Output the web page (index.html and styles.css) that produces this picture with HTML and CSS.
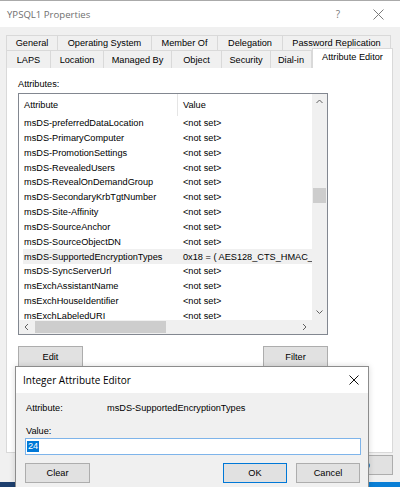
FILE: index.html
```html
<!DOCTYPE html>
<html>
<head>
<meta charset="utf-8">
<link rel="stylesheet" href="styles.css">
</head>
<body>
<div class="win">
  <div class="titlebar">
    <span class="title">YPSQL1 Properties</span>
    <span class="qmark">?</span>
    <svg class="xbtn" width="11" height="11" viewBox="0 0 11 11"><path d="M0.5 0.5 L10.5 10.5 M10.5 0.5 L0.5 10.5" stroke="#7a7a7a" stroke-width="1" fill="none"/></svg>
  </div>
  <div class="main">
    <div class="tabs">
      <div class="tabrow row1">
        <div class="tab">General</div>
        <div class="tab">Operating System</div>
        <div class="tab">Member Of</div>
        <div class="tab">Delegation</div>
        <div class="tab">Password Replication</div>
      </div>
      <div class="tabrow row2">
        <div class="tab">LAPS</div>
        <div class="tab">Location</div>
        <div class="tab">Managed By</div>
        <div class="tab">Object</div>
        <div class="tab">Security</div>
        <div class="tab">Dial-in</div>
        <div class="tab sel">Attribute Editor</div>
      </div>
    </div>
    <div class="panel">
      <div class="label">Attributes:</div>
      <div class="listbox">
        <div class="listmain">
          <div class="lhead">
            <div class="hcell hattr">Attribute</div>
            <div class="hcell hval">Value</div>
          </div>
          <div class="lbody">
            <div class="lrow"><span class="c1">msDS-preferredDataLocation</span><span class="c2">&lt;not set&gt;</span></div>
            <div class="lrow"><span class="c1">msDS-PrimaryComputer</span><span class="c2">&lt;not set&gt;</span></div>
            <div class="lrow"><span class="c1">msDS-PromotionSettings</span><span class="c2">&lt;not set&gt;</span></div>
            <div class="lrow"><span class="c1">msDS-RevealedUsers</span><span class="c2">&lt;not set&gt;</span></div>
            <div class="lrow"><span class="c1">msDS-RevealOnDemandGroup</span><span class="c2">&lt;not set&gt;</span></div>
            <div class="lrow"><span class="c1">msDS-SecondaryKrbTgtNumber</span><span class="c2">&lt;not set&gt;</span></div>
            <div class="lrow"><span class="c1">msDS-Site-Affinity</span><span class="c2">&lt;not set&gt;</span></div>
            <div class="lrow"><span class="c1">msDS-SourceAnchor</span><span class="c2">&lt;not set&gt;</span></div>
            <div class="lrow"><span class="c1">msDS-SourceObjectDN</span><span class="c2">&lt;not set&gt;</span></div>
            <div class="lrow hl"><span class="c1">msDS-SupportedEncryptionTypes</span><span class="c2">0x18 = ( AES128_CTS_HMAC_</span></div>
            <div class="lrow"><span class="c1">msDS-SyncServerUrl</span><span class="c2">&lt;not set&gt;</span></div>
            <div class="lrow"><span class="c1">msExchAssistantName</span><span class="c2">&lt;not set&gt;</span></div>
            <div class="lrow"><span class="c1">msExchHouseIdentifier</span><span class="c2">&lt;not set&gt;</span></div>
            <div class="lrow"><span class="c1">msExchLabeledURI</span><span class="c2">&lt;not set&gt;</span></div>
          </div>
        </div>
        <div class="vscroll">
          <svg class="arr" width="15" height="15" viewBox="0 0 15 15"><path d="M4.5 9 L7.5 6 L10.5 9" stroke="#606060" fill="none"/></svg>
          <div class="vtrack"><div class="vthumb"></div></div>
          <svg class="arr" width="15" height="15" viewBox="0 0 15 15"><path d="M4.5 5.5 L7.5 8.5 L10.5 5.5" stroke="#606060" fill="none"/></svg>
        </div>
        <div class="hscroll">
          <svg class="arr" width="15" height="14" viewBox="0 0 15 14"><path d="M9 4 L6 7 L9 10" stroke="#606060" fill="none"/></svg>
          <div class="htrack"><div class="hthumb"></div></div>
          <svg class="arr" width="15" height="14" viewBox="0 0 15 14"><path d="M6 4 L9 7 L6 10" stroke="#606060" fill="none"/></svg>
        </div>
        <div class="corner"></div>
      </div>
      <div class="listbtns">
        <div class="btn">Edit</div>
        <div class="btn">Filter</div>
      </div>
    </div>
    <div class="winbtns">
      <div class="btn wb">OK</div>
      <div class="btn wb">Cancel</div>
      <div class="btn wb">Apply</div>
      <div class="btn wb">Help</div>
    </div>
  </div>
  <div class="taskbar"></div>

  <div class="dialog">
    <div class="dtitle">
      <span class="dtext">Integer Attribute Editor</span>
      <svg class="dx" width="10" height="10" viewBox="0 0 10 10"><path d="M0.5 0.5 L9.5 9.5 M9.5 0.5 L0.5 9.5" stroke="#111" stroke-width="1" fill="none"/></svg>
    </div>
    <div class="dbody">
      <div class="drow"><span class="dlab">Attribute:</span><span>msDS-SupportedEncryptionTypes</span></div>
      <div class="dvlab">Value:</div>
      <div class="dinput"><span class="seltext">24</span></div>
      <div class="dbtns">
        <div class="btn db">Clear</div>
        <div class="btn db ok">OK</div>
        <div class="btn db">Cancel</div>
      </div>
    </div>
  </div>
</div>
</body>
</html>
```
FILE: styles.css
```css
* { box-sizing: border-box; }
html, body { margin: 0; padding: 0; }
body {
  width: 400px;
  height: 487px;
  overflow: hidden;
  background: #f0f0f0;
  font-family: "Liberation Sans", Arial, sans-serif;
  font-size: 9.2px;
  color: #000;
}
.win {
  position: relative;
  width: 400px;
  height: 487px;
  display: flex;
  flex-direction: column;
}
.titlebar {
  height: 27px;
  flex: none;
  background: #fff;
  border-top: 1px solid #aaaaaa;
  display: flex;
  align-items: center;
  padding-left: 7px;
}
.title {
  font-family: "Open Sans", "Noto Sans", sans-serif;
  font-size: 9.6px;
  color: #6f6f6f;
  flex: 1;
}
.qmark {
  font-family: "Open Sans", sans-serif;
  font-size: 10px;
  color: #7a7a7a;
  margin-right: 33px;
}
.xbtn { margin-right: 16px; }
.main {
  flex: 1;
  padding: 8px 7px 0 6px;
  display: flex;
  flex-direction: column;
}
.tabs { display: flex; flex-direction: column; position: relative; z-index: 2; }
.tabrow { display: grid; height: 16px; }
.row1 { grid-template-columns: 52px 94px 66px 65px 108px; height: 15px; }
.row2 { grid-template-columns: 45px 53px 68px 50px 49px 41px 81px; height: 17px; }
.tab {
  background: #f0f0f0;
  border-top: 1px solid #d9d9d9;
  border-right: 1px solid #d9d9d9;
  display: flex;
  align-items: center;
  justify-content: center;
  white-space: nowrap;
  color: #000;
}
.tab:first-child { border-left: 1px solid #d9d9d9; }
.tab.sel {
  background: #fff;
  margin-top: -2px;
  height: 20px;
  border-left: 1px solid #d9d9d9;
  padding-bottom: 4px;
}
.panel {
  height: 386px;
  background: #fff;
  border: 1px solid #d9d9d9;
  padding: 10px 0 0 11px;
  position: relative;
  z-index: 1;
}
.label { line-height: 12px; height: 12px; }
.listbox {
  margin-top: 3px;
  width: 310px;
  height: 242px;
  border: 1px solid #828790;
  display: grid;
  grid-template-columns: 293px 15px;
  grid-template-rows: 226px 14px;
  background: #fff;
}
.listmain { overflow: hidden; }
.lhead { display: flex; height: 21.6px; }
.hcell { display: flex; align-items: center; white-space: nowrap; }
.hattr { width: 159px; padding-left: 5px; border-right: 1px solid #e5e5e5; }
.hval { padding-left: 5px; }
.lbody { padding-left: 4px; }
.lrow {
  display: flex;
  height: 14.85px;
  align-items: center;
  white-space: nowrap;
}
.lrow.hl { background: #f0f0f0; }
.c1 { width: 155px; flex: none; padding-left: 1px; overflow: hidden; }
.c2 { padding-left: 5px; flex: none; }
.vscroll {
  background: #f0f0f0;
  display: flex;
  flex-direction: column;
}
.arr { display: block; flex: none; }
.vtrack { flex: 1; position: relative; }
.vthumb {
  position: absolute;
  left: 1px;
  right: 1px;
  top: 79px;
  height: 15px;
  background: #cdcdcd;
}
.hscroll {
  background: #f0f0f0;
  display: flex;
  align-items: stretch;
}
.htrack { flex: 1; position: relative; }
.hthumb {
  position: absolute;
  top: 1px;
  bottom: 1px;
  left: 1px;
  width: 131px;
  background: #cdcdcd;
}
.corner { background: #f0f0f0; }
.listbtns {
  width: 310px;
  margin-top: 11px;
  display: flex;
  justify-content: space-between;
}
.btn {
  background: #e1e1e1;
  border: 1px solid #adadad;
  display: flex;
  align-items: center;
  justify-content: center;
  white-space: nowrap;
}
.listbtns .btn { width: 65px; height: 21px; }
.winbtns {
  margin-top: 2px;
  display: flex;
  justify-content: flex-end;
  gap: 6px;
}
.wb { width: 65px; height: 20px; }
.taskbar {
  margin-top: auto;
  height: 5px;
  flex: none;
  background: linear-gradient(to right, #1d3f6e 0, #1d3f6e 15px, #0a7fd6 15px);
}
.dialog {
  position: absolute;
  left: 15px;
  top: 366px;
  width: 354px;
  height: 130px;
  border: 1px solid #8c8c8c;
  background: #f0f0f0;
  z-index: 5;
  box-shadow: 0 0 6px rgba(0,0,0,0.15);
}
.dtitle {
  height: 26px;
  background: #fff;
  display: flex;
  align-items: center;
  padding-left: 7px;
}
.dtext {
  font-family: "Open Sans", "Noto Sans", sans-serif;
  font-size: 10px;
  color: #000;
  flex: 1;
}
.dx { margin-right: 9px; }
.dbody { padding: 9px 8px 0 10px; }
.drow { display: flex; line-height: 12px; height: 12px; white-space: nowrap; }
.dlab { width: 81px; flex: none; }
.dvlab { margin-top: 11px; line-height: 12px; height: 12px; }
.dinput {
  margin-top: 1px;
  margin-left: -1px;
  width: 336px;
  height: 17px;
  background: #fff;
  border: 1px solid #7eb4ea;
  display: flex;
  align-items: center;
  padding-left: 1px;
}
.seltext {
  background: #0078d7;
  color: #fff;
  padding: 0 1px;
  line-height: 11px;
  height: 11px;
}
.dbtns {
  margin-top: 8px;
  margin-left: -1px;
  display: flex;
  gap: 9px;
}
.db { width: 65px; height: 20px; }
.ok { margin-left: auto; border-color: #0078d7; width: 64px; }
.dbtns .db:last-child { width: 64px; }
```
